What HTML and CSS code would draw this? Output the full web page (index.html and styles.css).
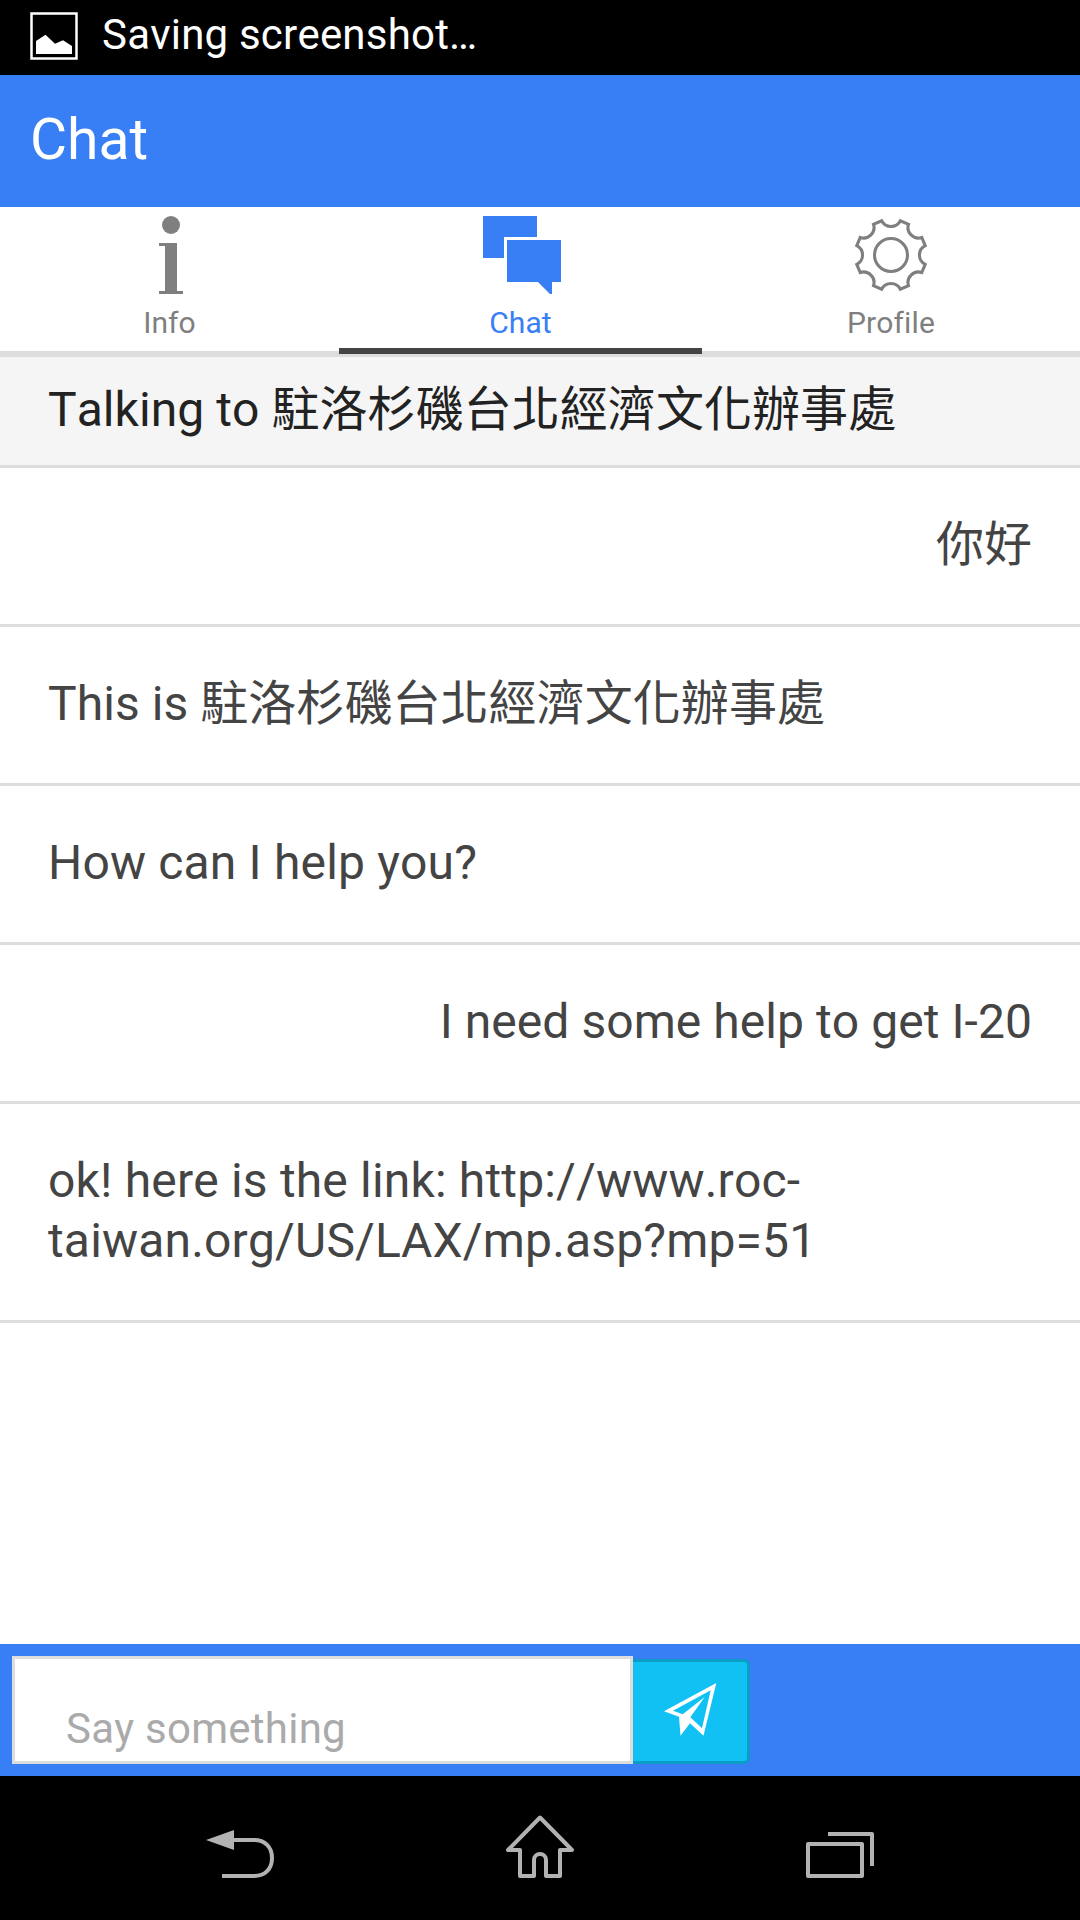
FILE: index.html
```html
<!DOCTYPE html>
<html lang="zh-Hant">

<head>
  <meta charset="utf-8" />
  <title>Chat</title>
  <link rel="stylesheet" href="styles.css">
</head>

<body>
  <div class="status-bar">
    <svg class="status-icon" width="48" height="48" viewBox="0 0 48 48">
      <rect x="1.5" y="1.5" width="45" height="45" fill="none" stroke="#fff" stroke-width="2.500" />
      <path d="M6 42V29l9.500-6.300 9.500 9 8-3.400 9 5.700v8z" fill="#fff" />
    </svg>
    <span class="status-text">Saving screenshot…</span>
  </div>

  <header class="bar bar-header">
    <h1 class="title">Chat</h1>
  </header>

  <nav class="tabs">
    <a class="tab tab-info">
      <svg class="icon icon-shift" width="24" height="78" viewBox="0 0 24 78">
        <circle cx="12" cy="9" r="9" />
        <path d="M0 27h18v48h6v3H0v-3h6V30H0z" />
      </svg>
      <span class="tab-title">Info</span>
    </a>
    <a class="tab tab-chat active">
      <svg class="icon icon-shift" width="78" height="78" viewBox="0 0 78 78">
        <path d="M0 0h54v21H21v21H0z" />
        <path d="M24 24h54v42h-9v12h-2L55 66H24z" />
      </svg>
      <span class="tab-title">Chat</span>
    </a>
    <a class="tab tab-profile">
      <svg class="icon icon-line" width="78" height="78" viewBox="-38.3 -38.3 76.6 76.6">
        <circle r="16.200" />
        <path d="M-9.200-33.600A10.300 10.300 0 0 0 9.200-33.600L17.200-30.200A10.300 10.300 0 0 0 30.200-17.200L33.600-9.200A10.300 10.300 0 0 0 33.600 9.200L30.200 17.200A10.300 10.300 0 0 0 17.200 30.200L9.200 33.600A10.300 10.300 0 0 0-9.200 33.600L-17.200 30.200A10.300 10.300 0 0 0-30.200 17.200L-33.600 9.200A10.300 10.300 0 0 0-33.600-9.200L-30.200-17.200A10.300 10.300 0 0 0-17.200-30.200z" />
      </svg>
      <span class="tab-title">Profile</span>
    </a>
  </nav>

  <main class="content">
    <div class="item item-divider">Talking to 駐洛杉磯台北經濟文化辦事處</div>
    <div class="item item-me">你好</div>
    <div class="item">This is 駐洛杉磯台北經濟文化辦事處</div>
    <div class="item item-latin">How can I help you?</div>
    <div class="item item-me">I need some help to get I-20</div>
    <div class="item item-latin">ok! here is the link: http://www.roc-<br>taiwan.org/US/LAX/mp.asp?mp=51</div>
  </main>

  <footer class="bar bar-footer">
    <input class="message" type="text" placeholder="Say something">
    <button class="send" type="button" aria-label="Send">
      <svg width="53" height="53" viewBox="0 0 53 53">
        <path fill="#fff" fill-rule="evenodd" d="M52.300 0L0 28.300l15 5.400 1.500 19L26 40.300l13.500 12.400zM46.700 7.300L38 45.300l-11.700-11L40.700 14l-22 17.300-9.700-3.600z" />
      </svg>
    </button>
  </footer>

  <div class="nav-bar">
    <span class="nav-key">
      <svg width="68" height="48" viewBox="0 0 68 48">
        <path d="M0 10L28 0v20z" fill="#b2b2b2" />
        <path d="M27 10h21c11 0 18 7 18 18s-7 18-18 18H16" />
      </svg>
    </span>
    <span class="nav-key">
      <svg width="68" height="64" viewBox="0 0 68 64">
        <path stroke-linejoin="round" d="M34 3.500L2 36h12v26h14V46a6 6 0 0 1 12 0v16h14V36h12z" />
      </svg>
    </span>
    <span class="nav-key">
      <svg width="68" height="46" viewBox="0 0 68 46">
        <rect x="2" y="12" width="54" height="32" stroke-linejoin="round" />
        <path stroke-linejoin="round" d="M22 2h44v32" />
      </svg>
    </span>
  </div>
</body>

</html>
```
FILE: styles.css
```css
* {
  box-sizing: border-box;
}

body {
  margin: 0;
  height: 1920px;
  display: flex;
  flex-direction: column;
  background: #fff;
  color: #444;
  font: 48px/60px Roboto, "Noto Sans CJK TC", sans-serif;
  font-kerning: none;
}

svg {
  display: block;
}

.status-bar {
  height: 75px;
  padding: 0 30px;
  display: flex;
  align-items: center;
  gap: 24px;
  background: #000;
  color: #fff;
}

.status-icon {
  margin-bottom: 3px;
}

.status-text {
  font-size: 42px;
  line-height: 70px;
  letter-spacing: 0.2px;
  margin-bottom: 5px;
}

.bar {
  height: 132px;
  background: #387ef5;
}

.bar-header {
  padding: 0 30px;
}

.title {
  margin: 0;
  color: #fff;
  font-size: 57px;
  font-weight: normal;
  line-height: 129px;
}

.tabs {
  height: 147px;
  display: flex;
  border-bottom: 3px solid #ddd;
}

.tab {
  height: 147px;
  padding-top: 9px;
  display: flex;
  flex-direction: column;
  align-items: center;
  color: #7f7f7f;
}

.tab-info {
  width: 339px;
}

.tab-chat {
  width: 363px;
}

.tab-profile {
  width: 378px;
}

.tab.active {
  color: #387ef5;
  border-bottom: 6px solid #444;
}

.tab-title {
  margin-top: 11px;
  font-size: 30px;
  line-height: 36px;
  letter-spacing: 0.1px;
}

.icon {
  fill: currentColor;
}

.icon-shift {
  margin-left: 3px;
}

.icon-line {
  fill: none;
  stroke: currentColor;
  stroke-width: 3;
}

.content {
  flex: 1;
}

.item {
  padding: 47px 48px 49px;
  border-bottom: 3px solid #ddd;
  letter-spacing: 0.06px;
}

.item-divider {
  padding: 23px 48px 25px;
  border-top: 3px solid #ddd;
  background: #f5f5f5;
  color: #222;
}

.item-latin {
  letter-spacing: 0.17px;
}

.item-me {
  text-align: right;
}

.bar-footer {
  padding: 12px;
  display: flex;
  align-items: flex-end;
}

.message {
  width: 621px;
  height: 108px;
  padding: 36px 48px 0 51px;
  border: 3px solid #ddd;
  border-radius: 0;
  background: #fff;
  color: #111;
  font: 42px/60px Roboto, "Noto Sans CJK TC", sans-serif;
  font-kerning: none;
  letter-spacing: 0.25px;
}

.message::placeholder {
  color: #aaa;
}

.send {
  width: 117px;
  height: 105px;
  padding: 0 0 4px;
  display: flex;
  align-items: center;
  justify-content: center;
  border: 3px solid #0a9dc7;
  border-left: 0;
  border-radius: 0 6px 6px 0;
  background: #11c1f3;
}

.nav-bar {
  height: 144px;
  padding: 0 90px 42px;
  display: flex;
  align-items: flex-end;
  background: #000;
}

.nav-key {
  flex: 1;
  display: flex;
  justify-content: center;
  fill: none;
  stroke: #b2b2b2;
  stroke-width: 4;
}

.nav-key path[fill] {
  stroke: none;
}
```
